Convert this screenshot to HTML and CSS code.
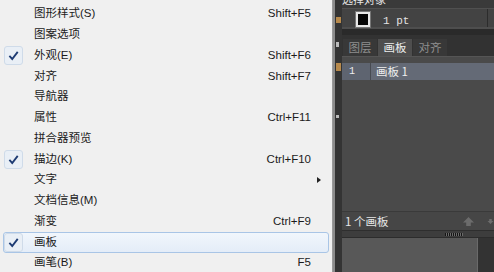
FILE: index.html
```html
<!DOCTYPE html>
<html lang="zh-CN">
<head>
  <meta charset="UTF-8" />
  <title>窗口菜单</title>
  <link rel="stylesheet" href="styles.css">
</head>
<body>
  <div class="screen">
    <div class="menu">
      <div class="item"><span class="check"></span><span class="label">图形样式(S)</span><span class="key">Shift+F5</span><span class="sub"></span></div>
      <div class="item"><span class="check"></span><span class="label">图案选项</span><span class="key"></span><span class="sub"></span></div>
      <div class="item checked"><span class="check"><svg viewBox="0 0 12 12"><path d="M1.5 6.5 L4.6 9.8 L10.6 2" /></svg></span><span class="label">外观(E)</span><span class="key">Shift+F6</span><span class="sub"></span></div>
      <div class="item"><span class="check"></span><span class="label">对齐</span><span class="key">Shift+F7</span><span class="sub"></span></div>
      <div class="item"><span class="check"></span><span class="label">导航器</span><span class="key"></span><span class="sub"></span></div>
      <div class="item"><span class="check"></span><span class="label">属性</span><span class="key">Ctrl+F11</span><span class="sub"></span></div>
      <div class="item"><span class="check"></span><span class="label">拼合器预览</span><span class="key"></span><span class="sub"></span></div>
      <div class="item checked"><span class="check"><svg viewBox="0 0 12 12"><path d="M1.5 6.5 L4.6 9.8 L10.6 2" /></svg></span><span class="label">描边(K)</span><span class="key">Ctrl+F10</span><span class="sub"></span></div>
      <div class="item"><span class="check"></span><span class="label">文字</span><span class="key"></span><span class="sub"><i class="arrow"></i></span></div>
      <div class="item"><span class="check"></span><span class="label">文档信息(M)</span><span class="key"></span><span class="sub"></span></div>
      <div class="item"><span class="check"></span><span class="label">渐变</span><span class="key">Ctrl+F9</span><span class="sub"></span></div>
      <div class="item checked hover"><span class="check"><svg viewBox="0 0 12 12"><path d="M1.5 6.5 L4.6 9.8 L10.6 2" /></svg></span><span class="label">画板</span><span class="key"></span><span class="sub"></span></div>
      <div class="item"><span class="check"></span><span class="label">画笔(B)</span><span class="key">F5</span><span class="sub"></span></div>
    </div>

    <div class="dock">
      <div class="toolstrip">
        <span class="tool orange t1"></span>
        <span class="tool white t2"></span>
        <span class="tool orange t3"></span>
        <span class="tool white t4"></span>
      </div>

      <div class="panels">
        <div class="stroke-panel">
          <div class="stroke-title"><span>选择对象</span></div>
          <div class="stroke-row">
            <span class="swatch"></span>
            <span class="weight">1 pt</span>
            <span class="edge"></span>
          </div>
        </div>
        <div class="band"></div>

        <div class="tabs">
          <span class="tab">图层</span>
          <span class="tab active">画板</span>
          <span class="tab">对齐</span>
        </div>

        <div class="list">
          <div class="row">
            <span class="num">1</span>
            <span class="name">画板 1</span>
          </div>
        </div>

        <div class="footer">
          <span class="count">1 个画板</span>
          <span class="arrows">
            <svg class="arr" viewBox="0 0 14 12"><path d="M7 1 L13 7 L9.5 7 L9.5 11 L4.5 11 L4.5 7 L1 7 Z" /></svg>
            <svg class="arr cut" viewBox="0 0 14 12"><path d="M7 11 L13 5 L9.5 5 L9.5 1 L4.5 1 L4.5 5 L1 5 Z" /></svg>
          </span>
        </div>

        <div class="grip-bar"><span class="grip"></span></div>

        <div class="below">
          <div class="below-main"></div>
          <div class="below-side"></div>
        </div>
      </div>
    </div>
  </div>
</body>
</html>
```

FILE: styles.css
```css
body {
  margin: 0;
  padding: 0;
  width: 494px;
  height: 272px;
  overflow: hidden;
  background: #3b3b3b;
}

.screen {
  display: flex;
  height: 272px;
}

/* 菜单 */
.menu {
  width: 326px;
  padding: 3.6px 3px 0 3px;
  background: #f0f0f0;
  border-right: 1px solid #9a9a9a;
  font-family: "Liberation Sans", "Noto Sans CJK SC", sans-serif;
  font-size: 11.5px;
  color: #1b1b1b;
  flex-shrink: 0;
}

.item {
  display: grid;
  grid-template-columns: 30px 1fr auto 17px;
  align-items: center;
  height: 20.75px;
  box-sizing: border-box;
  border: 1px solid transparent;
  border-radius: 3px;
}

.item.hover {
  background: linear-gradient(#f1f6fc, #e4edf8);
  border-color: #a9c5e6;
}

.check {
  width: 19px;
  height: 19px;
  box-sizing: border-box;
  display: flex;
  align-items: center;
  justify-content: center;
  border-radius: 3px;
}

.item.checked .check {
  background: #e9eff6;
  border: 1px solid #cfdbe9;
}

.check svg {
  width: 11px;
  height: 11px;
  fill: none;
  stroke: #1d3b73;
  stroke-width: 2;
}

.label {
  line-height: 1;
}

.key {
  text-align: right;
  line-height: 1;
}

.sub {
  display: flex;
  align-items: center;
  padding-left: 6px;
}

.arrow {
  width: 0;
  height: 0;
  border-top: 3px solid transparent;
  border-bottom: 3px solid transparent;
  border-left: 4px solid #222;
}

/* 右侧面板 */
.dock {
  flex: 1;
  display: flex;
}

.toolstrip {
  width: 7px;
  background: #343434;
  border-left: 2px solid #8c8c8c;
  display: flex;
  flex-direction: column;
}

.tool {
  display: block;
  width: 5px;
  margin-left: 1px;
}

.tool.orange {
  background: #b88a4c;
}

.tool.white {
  background: #bcbcbc;
}

.t1 { height: 6px; margin-top: 17px; }
.t2 { height: 5px; margin-top: 19px; width: 3px; }
.t3 { height: 8px; margin-top: 16px; }
.t4 { height: 3px; margin-top: 44px; width: 3px; }

.panels {
  flex: 1;
  display: flex;
  flex-direction: column;
  font-family: "Noto Sans CJK SC", "Liberation Sans", sans-serif;
  font-size: 11px;
}

.stroke-panel {
  height: 29px;
  background: #434343;
  display: flex;
  flex-direction: column;
}

.stroke-title {
  height: 8px;
  overflow: hidden;
  background: #3a3a3a;
  border-bottom: 1px solid #505050;
}

.stroke-title span {
  display: block;
  margin-top: -8px;
  color: #e6e6e6;
  font-size: 11px;
  line-height: 14px;
}

.stroke-row {
  flex: 1;
  display: flex;
  align-items: center;
  padding-left: 14px;
  border-bottom: 2px solid #4e4e4e;
}

.swatch {
  width: 10px;
  height: 11px;
  margin-top: 3px;
  border: 2px solid #e8e8e8;
  outline: 1px solid #777;
  background: #050505;
}

.weight {
  margin-left: 13px;
  margin-top: 5px;
  font-family: "Liberation Mono", monospace;
  font-size: 11px;
  color: #e2e2e2;
}

.edge {
  margin-left: auto;
  margin-right: 6px;
  width: 1px;
  align-self: stretch;
  background: #2c2c2c;
}

.band {
  height: 6px;
  background: #2a2a2a;
}

.tabs {
  height: 21px;
  background: #323232;
  display: flex;
  align-items: flex-end;
  gap: 1px;
  padding-left: 1px;
}

.tab {
  height: 17px;
  width: 34px;
  text-align: center;
  line-height: 17px;
  font-size: 11.5px;
  color: #8e8e8e;
  background: #383838;
}

.tab.active {
  background: #4e4e4e;
  color: #ececec;
}

.list {
  height: 156px;
  box-sizing: border-box;
  background: #4a4a4a;
  border-top: 1px solid #555;
  border-bottom: 1px solid #3a3a3a;
  padding-top: 6px;
}

.row {
  display: flex;
  height: 17px;
  line-height: 17px;
  color: #eeeeee;
}

.num {
  width: 29px;
  padding-left: 7px;
  box-sizing: border-box;
  background: #5e6470;
  font-family: "Liberation Mono", monospace;
  font-size: 10px;
  border-right: 1px solid #474b52;
}

.name {
  flex: 1;
  padding-left: 5px;
  background: #646a76;
  font-size: 11.5px;
}

.footer {
  height: 18px;
  display: flex;
  align-items: center;
  padding-left: 3px;
  background: #464646;
  border-bottom: 1px solid #2e2e2e;
  color: #e6e6e6;
  font-size: 11.5px;
}

.arrows {
  margin-left: auto;
  display: flex;
  gap: 12px;
}

.arr {
  width: 13px;
  height: 11px;
  fill: #6c6c6c;
}

.arr.cut {
  width: 7px;
}

.grip-bar {
  height: 7px;
  background: #3d3d3d;
  border-bottom: 1px solid #2c2c2c;
  display: flex;
  justify-content: flex-end;
  padding-right: 31px;
  padding-top: 2px;
  box-sizing: border-box;
}

.grip {
  width: 18px;
  height: 3px;
  background: repeating-linear-gradient(90deg, #151515 0 1px, #6a6a6a 1px 2px);
}

.below {
  flex: 1;
  display: flex;
}

.below-main {
  flex: 1;
  background: #585858;
}

.below-side {
  width: 16px;
  background: #333333;
  border-left: 1px solid #6a6a6a;
}
```
